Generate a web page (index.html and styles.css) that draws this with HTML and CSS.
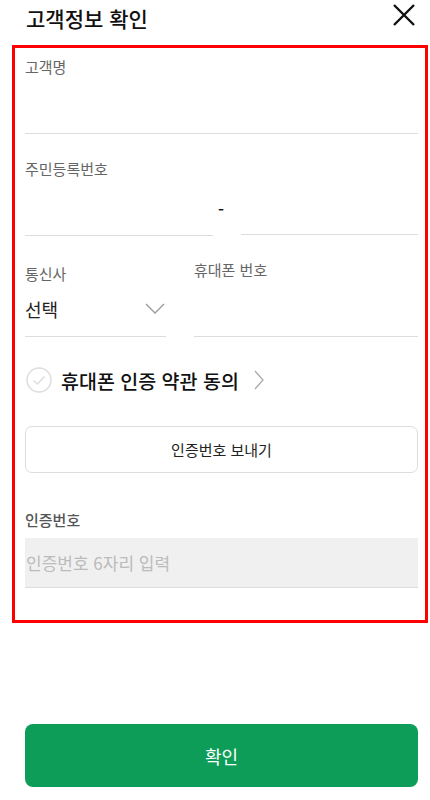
FILE: index.html
```html
<!DOCTYPE html>
<html lang="ko">
<head>
<meta charset="utf-8">
<title>고객정보 확인</title>
<link rel="stylesheet" href="styles.css">
</head>
<body>
<header class="header">
  <h1 class="title">고객정보 확인</h1>
  <svg class="close" width="24" height="24" viewBox="0 0 24 24"><path d="M2 2L22 22M22 2L2 22" stroke="#111" stroke-width="2.4" fill="none"/></svg>
</header>
<section class="form">
  <div class="field">
    <div class="label">고객명</div>
    <div class="input"></div>
  </div>
  <div class="field field-gap">
    <div class="label">주민등록번호</div>
    <div class="ssn">
      <div class="input ssn-a"></div>
      <span class="dash">-</span>
      <div class="input ssn-b"></div>
    </div>
  </div>
  <div class="phone-row">
    <div class="carrier">
      <div class="label label-carrier">통신사</div>
      <div class="select">
        <span>선택</span>
        <svg width="20" height="12" viewBox="0 0 20 12"><path d="M1 1L10 10L19 1" stroke="#999" stroke-width="1.3" fill="none"/></svg>
      </div>
    </div>
    <div class="phone">
      <div class="label">휴대폰 번호</div>
      <div class="input phone-input"></div>
    </div>
  </div>
  <div class="agree">
    <svg width="26" height="26" viewBox="0 0 26 26"><circle cx="13" cy="13" r="12" stroke="#ddd" stroke-width="1.5" fill="none"/><path d="M7.5 13.5L11.5 17L18.5 9.5" stroke="#ddd" stroke-width="1.5" fill="none"/></svg>
    <span class="agree-text">휴대폰 인증 약관 동의</span>
    <svg class="chev" width="10" height="20" viewBox="0 0 10 20"><path d="M1 1L9 10L1 19" stroke="#aaa" stroke-width="1.3" fill="none"/></svg>
  </div>
  <button class="send">인증번호 보내기</button>
  <div class="label label-code">인증번호</div>
  <div class="code">인증번호 6자리 입력</div>
</section>
<div class="footer">
  <button class="confirm">확인</button>
</div>
</body>
</html>
```
FILE: styles.css
```css
* { box-sizing: border-box; }
body {
  margin: 0;
  width: 430px;
  font-family: "Noto Sans CJK KR", "Noto Sans", sans-serif;
  background: #fff;
  color: #111;
}
.header {
  height: 45px;
  display: flex;
  align-items: flex-start;
  justify-content: space-between;
  padding: 0 14px 0 26px;
}
.title {
  margin: 0;
  font-size: 21px;
  font-weight: 500;
  line-height: 36px;
  color: #111;
}
.close { margin-top: 3px; }
.form {
  margin: 0 2px 0 12px;
  border: 3px solid #ff0000;
  padding: 9px 7px 32px 10px;
}
.label {
  font-size: 15px;
  line-height: 20px;
  color: #666;
}
.input {
  height: 57px;
  border-bottom: 1.5px solid #ddd;
}
.field-gap { margin-top: 25px; }
.ssn {
  display: flex;
  align-items: flex-start;
}
.ssn-a { width: 188px; }
.ssn-b { flex: 1; height: 56px; }
.dash {
  width: 28px;
  font-size: 17px;
  font-weight: 500;
  line-height: 20px;
  margin-top: 20px;
  padding-left: 5px;
  color: #111;
}
.phone-row {
  display: flex;
  gap: 28px;
  margin-top: 24px;
}
.carrier { width: 141px; }
.label-carrier { margin-top: 4px; }
.phone { flex: 1; }
.select {
  height: 53px;
  border-bottom: 1.5px solid #ddd;
  display: flex;
  align-items: center;
  justify-content: space-between;
  font-size: 18px;
  color: #222;
  padding-right: 1px;
  padding-bottom: 2px;
}
.phone-input { height: 57px; }
.agree {
  display: flex;
  align-items: center;
  margin-top: 30px;
  height: 26px;
  margin-left: 1px;
}
.agree-text {
  font-size: 19.5px;
  font-weight: 500;
  margin-left: 9px;
  color: #111;
}
.chev { margin-left: 15px; }
.send {
  display: block;
  width: 100%;
  height: 47px;
  margin-top: 33px;
  border: 1.5px solid #ddd;
  border-radius: 7px;
  background: #fff;
  font-family: inherit;
  font-size: 15px;
  color: #222;
}
.label-code {
  margin-top: 37px;
  font-weight: 500;
  color: #555;
}
.code {
  margin-top: 8px;
  height: 50px;
  background: #f0f0f0;
  border-bottom: 1.5px solid #ddd;
  font-size: 17px;
  color: #bbb;
  display: flex;
  align-items: center;
  padding-left: 1px;
}
.footer {
  padding: 101px 12px 0 25px;
}
.confirm {
  display: block;
  width: 100%;
  height: 63px;
  border: 0;
  border-radius: 8px;
  background: #0d9d58;
  color: #fff;
  font-family: inherit;
  font-size: 18px;
}
```
